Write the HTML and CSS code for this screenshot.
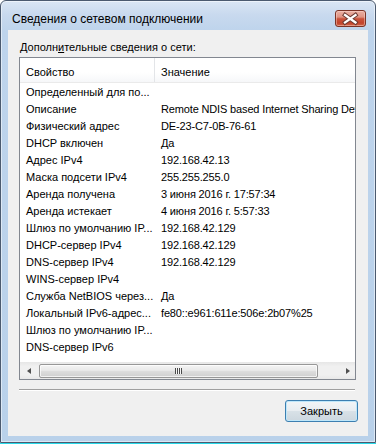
FILE: index.html
```html
<!DOCTYPE html>
<html lang="ru">
<head>
<meta charset="utf-8">
<title>Сведения о сетевом подключении</title>
<link rel="stylesheet" href="styles.css">
</head>
<body>
<div class="window">
  <div class="titlebar">
    <span class="title">Сведения о сетевом подключении</span>
    <button class="close-btn" aria-label="Закрыть">
      <svg width="31" height="17" viewBox="0 0 31 17">
        <path d="M10 5 L20.5 12.5 M20.5 5 L10 12.5" stroke="#6b3a32" stroke-width="4.2" stroke-linecap="square" fill="none"/>
        <path d="M10 5 L20.5 12.5 M20.5 5 L10 12.5" stroke="#ffffff" stroke-width="2.3" stroke-linecap="square" fill="none"/>
      </svg>
    </button>
  </div>
  <div class="client">
    <div class="label">Дополн<u>и</u>тельные сведения о сети:</div>
    <div class="listview">
      <div class="lv-header">
        <div class="hcol hcol1">Свойство</div>
        <div class="hcol hcol2">Значение</div>
      </div>
      <div class="lv-body">
        <div class="row"><div class="c1">Определенный для по...</div><div class="c2"></div></div>
        <div class="row"><div class="c1">Описание</div><div class="c2">Remote NDIS based Internet Sharing Device</div></div>
        <div class="row"><div class="c1">Физический адрес</div><div class="c2">DE-23-C7-0B-76-61</div></div>
        <div class="row"><div class="c1">DHCP включен</div><div class="c2">Да</div></div>
        <div class="row"><div class="c1">Адрес IPv4</div><div class="c2">192.168.42.13</div></div>
        <div class="row"><div class="c1">Маска подсети IPv4</div><div class="c2">255.255.255.0</div></div>
        <div class="row"><div class="c1">Аренда получена</div><div class="c2">3 июня 2016 г. 17:57:34</div></div>
        <div class="row"><div class="c1">Аренда истекает</div><div class="c2">4 июня 2016 г. 5:57:33</div></div>
        <div class="row"><div class="c1">Шлюз по умолчанию IP...</div><div class="c2">192.168.42.129</div></div>
        <div class="row"><div class="c1">DHCP-сервер IPv4</div><div class="c2">192.168.42.129</div></div>
        <div class="row"><div class="c1">DNS-сервер IPv4</div><div class="c2">192.168.42.129</div></div>
        <div class="row"><div class="c1">WINS-сервер IPv4</div><div class="c2"></div></div>
        <div class="row"><div class="c1">Служба NetBIOS через...</div><div class="c2">Да</div></div>
        <div class="row"><div class="c1">Локальный IPv6-адрес...</div><div class="c2">fe80::e961:611e:506e:2b07%25</div></div>
        <div class="row"><div class="c1">Шлюз по умолчанию IP...</div><div class="c2"></div></div>
        <div class="row"><div class="c1">DNS-сервер IPv6</div><div class="c2"></div></div>
      </div>
      <div class="hscroll">
        <div class="sb-arrow"><span class="tri tri-left"></span></div>
        <div class="sb-track">
          <div class="sb-thumb"><span class="grip"></span></div>
        </div>
        <div class="sb-arrow"><span class="tri tri-right"></span></div>
      </div>
    </div>
    <div class="sep"></div>
    <div class="actions">
      <button class="btn">Закрыть</button>
    </div>
  </div>
</div>
<div class="screen-edge"></div>
</body>
</html>
```

FILE: styles.css
```css
* { box-sizing: border-box; }
html, body { margin: 0; padding: 0; }
body {
  width: 376px;
  height: 444px;
  background: #ffffff;
  font-family: "Liberation Sans", Arial, sans-serif;
  font-size: 11px;
  color: #000;
  overflow: hidden;
}

.window {
  width: 376px;
  height: 443px;
  border: 1px solid #4b5a6f;
  border-radius: 6px 6px 0 0;
  background: linear-gradient(to bottom, #dae6f4 0, #c8d9ee 14px, #bed4ec 30px, #b9d1ea 100%);
  box-shadow: inset 0 0 0 1px rgba(255, 255, 255, 0.5);
  display: flex;
  flex-direction: column;
}

.titlebar {
  height: 29px;
  flex: none;
  display: flex;
  align-items: flex-start;
  justify-content: space-between;
  padding: 0 9px 0 11px;
}
.title {
  font-size: 12px;
  line-height: 14px;
  margin-top: 11px;
  color: #000;
}
.close-btn {
  width: 31px;
  height: 17px;
  margin-top: 9px;
  padding: 0;
  border: 1px solid #7a3326;
  border-radius: 3px;
  background: linear-gradient(to bottom, #eab0a3 0%, #df9484 40%, #c9523a 52%, #c2432c 80%, #d0664a 100%);
  box-shadow: inset 0 0 0 1px rgba(255, 220, 210, 0.45);
  display: flex;
  align-items: center;
  justify-content: center;
}
.close-btn svg { display: block; margin: -1px; }

.client {
  flex: none;
  height: 406px;
  margin: 0 7px;
  background: #f0f0f0;
  padding: 11px 0 0 11px;
}

.label {
  height: 13px;
  line-height: 13px;
  padding-left: 1px;
  margin-bottom: 3px;
  white-space: nowrap;
}
.label u { text-decoration-thickness: 1px; text-underline-offset: 1px; }

.listview {
  width: 337px;
  height: 323px;
  border: 1px solid #828790;
  background: #fff;
  display: flex;
  flex-direction: column;
  overflow: hidden;
}

.lv-header {
  height: 25px;
  flex: none;
  display: flex;
  background: linear-gradient(to bottom, #ffffff 0%, #ffffff 60%, #f6f7f9 100%);
  border-bottom: 1px solid #eaeaea;
}
.hcol {
  padding: 4px 0 0 6px;
  line-height: 20px;
  white-space: nowrap;
}
.hcol1 {
  width: 135px;
  flex: none;
  border-right: 1px solid #e3e5e8;
}
.hcol2 { flex: 1; }

.lv-body {
  flex: 1;
  overflow: hidden;
  padding-top: 1px;
}
.row {
  display: flex;
  height: 17px;
  line-height: 17px;
  white-space: nowrap;
}
.c1 {
  width: 135px;
  flex: none;
  padding-left: 6px;
}
.c2 {
  flex: none;
  padding-left: 6px;
  letter-spacing: -0.15px;
}

.hscroll {
  height: 17px;
  flex: none;
  display: flex;
  align-items: center;
  background: linear-gradient(to bottom, #e6e6e6 0%, #f0f0f0 25%, #f0f0f0 75%, #e8e8e8 100%);
}
.sb-arrow {
  width: 17px;
  height: 17px;
  flex: none;
  display: flex;
  align-items: center;
  justify-content: center;
}
.tri {
  width: 0;
  height: 0;
  border-top: 3.5px solid transparent;
  border-bottom: 3.5px solid transparent;
}
.tri-left { border-right: 4px solid #505050; margin-left: 1px; }
.tri-right { border-left: 4px solid #505050; margin-left: 3px; }
.sb-track {
  flex: 1;
  height: 17px;
  display: flex;
  align-items: center;
}
.sb-thumb {
  width: 279px;
  height: 14px;
  margin-left: 2px;
  border: 1px solid #979797;
  border-radius: 2px;
  background: linear-gradient(to bottom, #f4f4f4 0%, #e9e9e9 45%, #dcdcdc 55%, #d0d0d0 100%);
  box-shadow: inset 0 0 0 1px rgba(255, 255, 255, 0.7);
  display: flex;
  align-items: center;
  justify-content: center;
}
.grip {
  width: 7px;
  height: 6px;
  background: repeating-linear-gradient(to right, #4a4a4a 0, #4a4a4a 1px, #f6f6f6 1px, #f6f6f6 2px);
}

.sep {
  width: 336px;
  height: 2px;
  margin-top: 9px;
  border-top: 1px solid #a0a0a0;
  border-bottom: 1px solid #ffffff;
}

.actions {
  width: 339px;
  margin-top: 9px;
  display: flex;
  justify-content: flex-end;
}
.btn {
  width: 73px;
  height: 22px;
  padding: 0;
  font-family: "Liberation Sans", Arial, sans-serif;
  font-size: 11px;
  line-height: 20px;
  color: #000;
  border: 1px solid #3c7fb1;
  border-radius: 3px;
  background: linear-gradient(to bottom, #f2f5f7 0%, #e8edf1 48%, #d8e1e7 52%, #ccd7df 100%);
  box-shadow: inset 0 0 0 1px #bfe7fa;
}

.screen-edge {
  height: 1px;
  background: #27d8e8;
}
```
